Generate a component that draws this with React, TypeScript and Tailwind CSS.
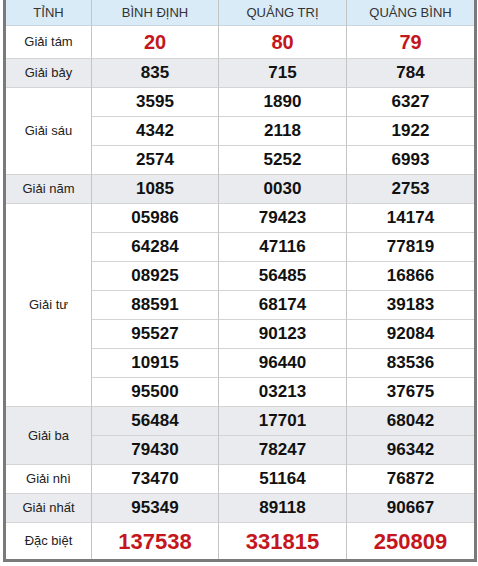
import React from "react";

type Group = { label: string; rows: string[][]; bg: string; kind?: "red" | "special" };

const groups: Group[] = [
  { label: "Giải tám", rows: [["20", "80", "79"]], bg: "bg-white", kind: "red" },
  { label: "Giải bảy", rows: [["835", "715", "784"]], bg: "bg-[#e9ebef]" },
  {
    label: "Giải sáu",
    rows: [
      ["3595", "1890", "6327"],
      ["4342", "2118", "1922"],
      ["2574", "5252", "6993"],
    ],
    bg: "bg-white",
  },
  { label: "Giải năm", rows: [["1085", "0030", "2753"]], bg: "bg-[#e9ebef]" },
  {
    label: "Giải tư",
    rows: [
      ["05986", "79423", "14174"],
      ["64284", "47116", "77819"],
      ["08925", "56485", "16866"],
      ["88591", "68174", "39183"],
      ["95527", "90123", "92084"],
      ["10915", "96440", "83536"],
      ["95500", "03213", "37675"],
    ],
    bg: "bg-white",
  },
  {
    label: "Giải ba",
    rows: [
      ["56484", "17701", "68042"],
      ["79430", "78247", "96342"],
    ],
    bg: "bg-[#e9ebef]",
  },
  { label: "Giải nhì", rows: [["73470", "51164", "76872"]], bg: "bg-white" },
  { label: "Giải nhất", rows: [["95349", "89118", "90667"]], bg: "bg-[#e9ebef]" },
  { label: "Đặc biệt", rows: [["137538", "331815", "250809"]], bg: "bg-white", kind: "special" },
];

const spanClass: Record<number, string> = {
  1: "row-span-1",
  2: "row-span-2",
  3: "row-span-3",
  7: "row-span-7",
};

export default function App() {
  const cells: React.ReactNode[] = [];
  groups.forEach((g, gi) => {
    const last = gi === groups.length - 1;
    cells.push(
      <div
        key={`l${gi}`}
        className={`${spanClass[g.rows.length]} ${g.bg} ${last ? "" : "border-b border-[#d4d4d4]"} flex items-center justify-center text-[13px] text-[#222]`}
      >
        {g.label}
      </div>
    );
    g.rows.forEach((r, ri) => {
      r.forEach((n, ci) => {
        const size =
          g.kind === "special"
            ? "text-[22px] text-[#c4161c]"
            : g.kind === "red"
            ? "text-[20px] text-[#c4161c]"
            : "text-[17px] text-[#111]";
        cells.push(
          <div
            key={`c${gi}-${ri}-${ci}`}
            className={`${g.bg} ${last ? "" : "border-b border-[#d4d4d4]"} border-l border-l-[#c4c4c4] flex items-center justify-center font-bold ${size}`}
          >
            {n}
          </div>
        );
      });
    });
  });

  return (
    <div className="w-[478px] h-[566px] bg-white pl-[3px] pr-[1px]" style={{ fontFamily: '"Liberation Sans", Arial, sans-serif' }}>
      <div className="w-[474px] border-l-[3px] border-r-[3px] border-b-[3px] border-[#7a7a7a]">
        <div className="grid grid-cols-[85px_127px_128px_128px] grid-rows-[26px_33px_repeat(16,29px)_36px]">
          {["TỈNH", "BÌNH ĐỊNH", "QUẢNG TRỊ", "QUẢNG BÌNH"].map((h, i) => (
            <div
              key={h}
              className={`bg-[#d9ebf7] border-b border-[#c8d4de] ${i > 0 ? "border-l border-l-[#c4c4c4]" : ""} flex items-center justify-center text-[13px] text-[#333]`}
            >
              {h}
            </div>
          ))}
          {cells}
        </div>
      </div>
    </div>
  );
}
